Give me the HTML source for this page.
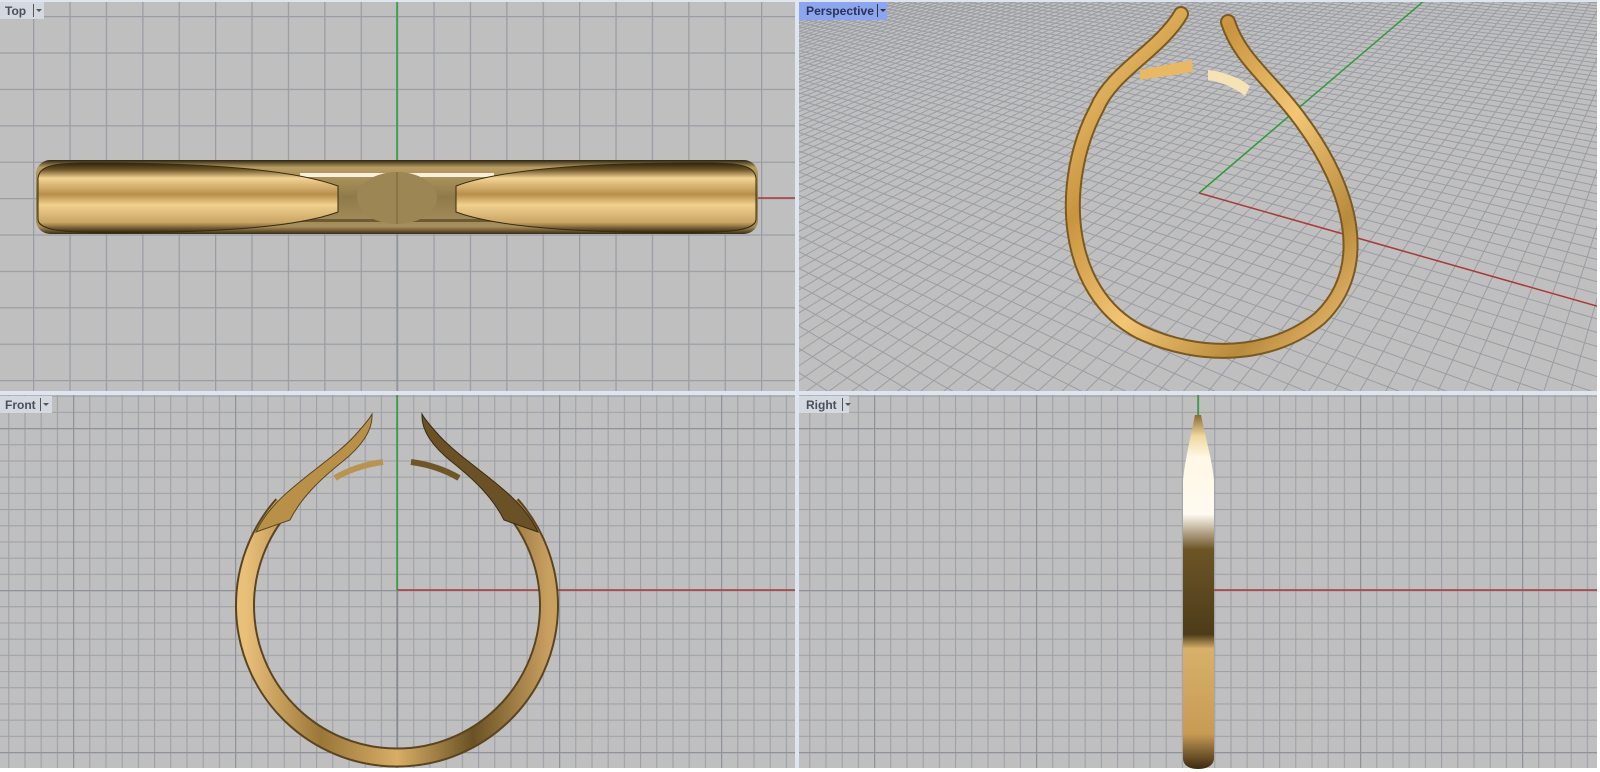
<!DOCTYPE html>
<html><head><meta charset="utf-8"><style>
html,body{margin:0;padding:0;background:#fff;width:1600px;height:772px;overflow:hidden;position:relative}
svg{display:block;position:absolute;left:0;top:0}
text{font-family:"Liberation Sans",sans-serif;font-weight:bold;font-size:12px;fill:#4a4f58}
</style></head><body>
<svg id="s" width="1600" height="772" viewBox="0 0 1600 772" xmlns="http://www.w3.org/2000/svg">
<defs>
<pattern id="gTop" x="33" y="16" width="36.4" height="36.4" patternUnits="userSpaceOnUse">
<path d="M0.5,0V36.4M0,0.5H36.4" stroke="#9a9ea4" stroke-width="1.6" fill="none"/></pattern>
<pattern id="gF" x="397" y="590" width="16.2" height="16.2" patternUnits="userSpaceOnUse">
<path d="M0.5,0V16.2M0,0.5H16.2" stroke="#9ea2a8" stroke-width="1.3" fill="none"/></pattern>
<pattern id="gFM" x="397" y="590" width="162" height="162" patternUnits="userSpaceOnUse">
<path d="M0.5,0V162M0,0.5H162" stroke="#8e9299" stroke-width="1.4" fill="none"/></pattern>
<pattern id="gR" x="1198" y="590" width="16.2" height="16.2" patternUnits="userSpaceOnUse">
<path d="M0.5,0V16.2M0,0.5H16.2" stroke="#9ea2a8" stroke-width="1.3" fill="none"/></pattern>
<pattern id="gRM" x="1198" y="590" width="162" height="162" patternUnits="userSpaceOnUse">
<path d="M0.5,0V162M0,0.5H162" stroke="#8e9299" stroke-width="1.4" fill="none"/></pattern>
<clipPath id="cP"><rect x="799" y="2" width="798" height="389"/></clipPath>
<linearGradient id="lobe" x1="0" y1="0" x2="0" y2="1">
<stop offset="0" stop-color="#2a200c"/><stop offset="0.1" stop-color="#6e5628"/><stop offset="0.22" stop-color="#f3d394"/>
<stop offset="0.45" stop-color="#b88f4c"/><stop offset="0.6" stop-color="#f1d08e"/><stop offset="0.85" stop-color="#c9a565"/><stop offset="1" stop-color="#2a1e08"/></linearGradient>
<linearGradient id="band" x1="0" y1="0" x2="0" y2="1">
<stop offset="0" stop-color="#2d2410"/><stop offset="0.1" stop-color="#b89d63"/><stop offset="0.5" stop-color="#8f7a4a"/><stop offset="0.9" stop-color="#a88f5a"/><stop offset="1" stop-color="#3a2d15"/></linearGradient>
<linearGradient id="gold" x1="0" y1="0" x2="1" y2="1">
<stop offset="0" stop-color="#f6cf80"/><stop offset="0.3" stop-color="#c9943f"/><stop offset="0.55" stop-color="#f3c676"/><stop offset="0.8" stop-color="#b88a3c"/><stop offset="1" stop-color="#f0c478"/></linearGradient>
<linearGradient id="goldF" x1="0" y1="0" x2="1" y2="0">
<stop offset="0" stop-color="#e9c07a"/><stop offset="0.25" stop-color="#9a7638"/><stop offset="0.5" stop-color="#d8ae66"/><stop offset="0.75" stop-color="#6a5224"/><stop offset="1" stop-color="#c9a060"/></linearGradient>
<linearGradient id="goldR" x1="0" y1="0" x2="0" y2="1">
<stop offset="0" stop-color="#8a6a30"/><stop offset="0.06" stop-color="#f0d9a0"/><stop offset="0.12" stop-color="#fff8e6"/><stop offset="0.28" stop-color="#fffaf0"/><stop offset="0.38" stop-color="#6c5426"/><stop offset="0.62" stop-color="#4d3c1a"/><stop offset="0.66" stop-color="#d7b06a"/><stop offset="0.9" stop-color="#c89b55"/><stop offset="1" stop-color="#3a2a10"/></linearGradient>
</defs>
<rect width="1600" height="772" fill="#fff"/>
<rect x="0" y="0" width="1597" height="768" fill="#dfe5ee"/>
<!-- Top -->
<rect x="0" y="2" width="795" height="389" fill="#bfbfbf"/>
<rect x="0" y="2" width="795" height="389" fill="url(#gTop)"/>
<line x1="397" y1="2" x2="397" y2="198" stroke="#2f9a3a" stroke-width="1.5"/>
<line x1="397" y1="198" x2="795" y2="198" stroke="#a83a3a" stroke-width="1.5"/>
<line x1="397" y1="198" x2="397" y2="391" stroke="#8a8e95" stroke-width="1.2"/>
<rect x="36" y="160" width="722" height="74" rx="14" fill="url(#band)"/>
<rect x="300" y="173" width="194" height="4" fill="#f6f0dc"/>
<rect x="300" y="219" width="194" height="3" fill="#6a5a35"/>
<ellipse cx="397" cy="198" rx="40" ry="26" fill="#9c8654"/>
<line x1="397" y1="172" x2="397" y2="224" stroke="#8b7547" stroke-width="2"/>
<path d="M38,178 C40,163 60,162 120,163 C230,164 300,172 338,186 L338,212 C300,226 230,232 120,233 C60,233 40,230 38,220 Z" fill="url(#lobe)" stroke="#3a2c10" stroke-width="1"/>
<path d="M756,178 C754,163 734,162 674,163 C564,164 494,172 456,186 L456,212 C494,226 564,232 674,233 C734,233 754,230 756,220 Z" fill="url(#lobe)" stroke="#3a2c10" stroke-width="1"/>
<!-- Perspective -->
<rect x="799" y="2" width="798" height="389" fill="#bfbfbf"/>
<g id="pg" clip-path="url(#cP)"></g>
<g clip-path="url(#cP)">
<line x1="1199" y1="193" x2="1425" y2="0" stroke="#2f9a3a" stroke-width="1.5"/>
<line x1="1199" y1="193" x2="1600" y2="307" stroke="#a83a3a" stroke-width="1.5"/>
<path d="M1181,14 C1160,50 1112,72 1097,108 C1058,180 1062,292 1140,332 C1200,360 1272,358 1320,318 C1372,268 1352,190 1302,122 C1272,80 1240,60 1228,22" fill="none" stroke="#7a5a20" stroke-width="16" stroke-linecap="round"/>
<path d="M1181,14 C1160,50 1112,72 1097,108 C1058,180 1062,292 1140,332 C1200,360 1272,358 1320,318 C1372,268 1352,190 1302,122 C1272,80 1240,60 1228,22" fill="none" stroke="url(#gold)" stroke-width="12" stroke-linecap="round"/>
<path d="M1140,70 L1192,60 L1193,72 L1140,80 Z" fill="#e8b865"/>
<path d="M1208,70 C1225,72 1240,78 1250,86 L1245,96 C1235,88 1222,82 1208,80 Z" fill="#f5e2b5"/>
</g>
<!-- Front -->
<rect x="0" y="395" width="795" height="373" fill="#bfbfbf"/>
<rect x="0" y="395" width="795" height="373" fill="url(#gF)"/>
<rect x="0" y="395" width="795" height="373" fill="url(#gFM)"/>
<line x1="397" y1="395" x2="397" y2="590" stroke="#2f9a3a" stroke-width="1.5"/>
<line x1="397" y1="590" x2="795" y2="590" stroke="#a83a3a" stroke-width="1.5"/>
<line x1="397" y1="590" x2="397" y2="768" stroke="#80848b" stroke-width="1.2"/>
<path d="M335,478 C352,468 368,464 383,462" fill="none" stroke="#b89450" stroke-width="6"/>
<path d="M459,478 C442,468 426,464 411,462" fill="none" stroke="#6e5628" stroke-width="6"/>
<path d="M283,505 A152,152 0 1 0 511,505" fill="none" stroke="#5a4520" stroke-width="20"/>
<path d="M283,505 A152,152 0 1 0 511,505" fill="none" stroke="url(#goldF)" stroke-width="16"/>
<path d="M256,532 C275,490 330,465 358,432 C366,423 370,418 372,414 C373,430 362,446 342,462 C322,478 302,496 290,520 Z" fill="#b89048" stroke="#5a4520" stroke-width="1"/>
<path d="M538,532 C519,490 464,465 436,432 C428,423 424,418 422,414 C421,430 432,446 452,462 C472,478 492,496 504,520 Z" fill="#6a5226" stroke="#3a2a10" stroke-width="1"/>
<!-- Right -->
<rect x="799" y="395" width="798" height="373" fill="#bfbfbf"/>
<rect x="799" y="395" width="798" height="373" fill="url(#gR)"/>
<rect x="799" y="395" width="798" height="373" fill="url(#gRM)"/>
<line x1="1198" y1="395" x2="1198" y2="416" stroke="#2f9a3a" stroke-width="1.5"/>
<line x1="1214" y1="590" x2="1597" y2="590" stroke="#a83a3a" stroke-width="1.5"/>
<path d="M1195,415 L1201,415 C1206,440 1212,460 1214,480 L1214,758 C1214,766 1206,769 1198,769 C1190,769 1183,766 1183,758 L1183,480 C1185,460 1190,440 1195,415 Z" fill="url(#goldR)"/>
<!-- labels -->
<rect x="0" y="2" width="44" height="17" fill="#d3d8e1"/><text x="5" y="15">Top</text>
<rect x="33" y="4" width="1" height="13" fill="#555"/><path d="M36,9 h6 l-3,3z" fill="#555"/>
<rect x="799" y="2" width="88" height="18" fill="#8ca5f0"/><text x="806" y="15" textLength="68" lengthAdjust="spacingAndGlyphs" style="fill:#2a3350">Perspective</text>
<rect x="877" y="4" width="1" height="13" fill="#333"/><path d="M880,9 h6 l-3,3z" fill="#333"/>
<rect x="0" y="396" width="52" height="17" fill="#d3d8e1"/><text x="5" y="409">Front</text>
<rect x="40" y="398" width="1" height="13" fill="#555"/><path d="M43,403 h6 l-3,3z" fill="#555"/>
<rect x="799" y="396" width="50" height="17" fill="#d3d8e1"/><text x="806" y="409">Right</text>
<rect x="842" y="398" width="1" height="13" fill="#555"/><path d="M845,403 h6 l-3,3z" fill="#555"/>
</svg>
<script>
(function(){
var a=0.0102,b=0.0148,rx=-23,ry=-154,gx=1764,gy=-290;
function m(u,v){var w=-a*u+b*v+1;if(w<0.05)return null;
return[(-a*rx*u+b*gx*v+1199)/w,(-a*ry*u+b*gy*v+193)/w];}
var g=document.getElementById('pg'),s='';
for(var k=-120;k<=120;k++){
 for(var d=0;d<2;d++){var pts=[];
  for(var q=-120;q<=120;q+=1){var P=d?m(k,q):m(q,k);if(P&&P[0]>-1500&&P[0]<3500&&P[1]>-1500&&P[1]<2500)pts.push(P[0].toFixed(1)+','+P[1].toFixed(1));}
  if(pts.length>1){s+='<polyline points="'+pts.join(' ')+'" fill="none" stroke="#9a9da3" stroke-width="1"/>';}}}
g.innerHTML=s;
})();
</script>
</body></html>
